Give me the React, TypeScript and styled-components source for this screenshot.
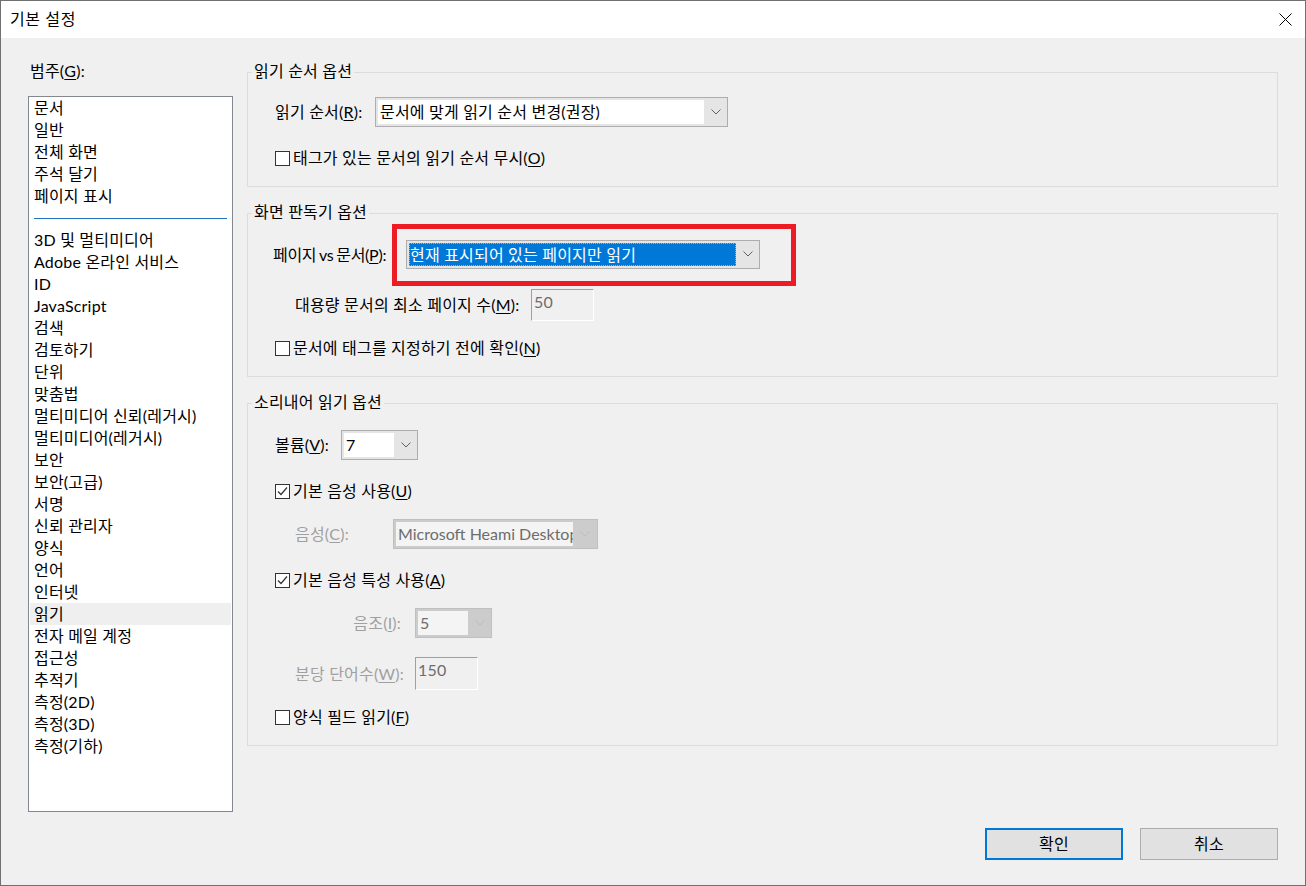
import React from 'react';
import styled, { createGlobalStyle } from 'styled-components';

const GlobalStyle = createGlobalStyle`
  html, body {
    margin: 0;
    padding: 0;
    background: #f0f0f0;
  }
  body {
    font-family: Lato, "Noto Sans CJK KR", sans-serif;
    font-size: 16px;
    letter-spacing: 0.2px;
    color: #000;
  }
  * {
    box-sizing: border-box;
  }
`;

const categories: (string | null)[] = [
    '문서',
    '일반',
    '전체 화면',
    '주석 달기',
    '페이지 표시',
    null,
    '3D 및 멀티미디어',
    'Adobe 온라인 서비스',
    'ID',
    'JavaScript',
    '검색',
    '검토하기',
    '단위',
    '맞춤법',
    '멀티미디어 신뢰(레거시)',
    '멀티미디어(레거시)',
    '보안',
    '보안(고급)',
    '서명',
    '신뢰 관리자',
    '양식',
    '언어',
    '인터넷',
    '읽기',
    '전자 메일 계정',
    '접근성',
    '추적기',
    '측정(2D)',
    '측정(3D)',
    '측정(기하)',
];

const Chevron = ({ color }: { color: string }) => (
    <svg width="10" height="6" viewBox="0 0 10 6">
        <polyline points="0.5,0.5 5,5 9.5,0.5" fill="none" stroke={color} strokeWidth="1" />
    </svg>
);

const CloseIcon = () => (
    <svg width="13" height="13" viewBox="0 0 13 13">
        <line x1="0.5" y1="0.5" x2="12.5" y2="12.5" stroke="#000" strokeWidth="1" />
        <line x1="12.5" y1="0.5" x2="0.5" y2="12.5" stroke="#000" strokeWidth="1" />
    </svg>
);

const CheckMark = () => (
    <svg width="13" height="13" viewBox="0 0 13 13">
        <polyline points="2,6.5 5,9.5 11,2.5" fill="none" stroke="#333" strokeWidth="1.2" />
    </svg>
);

type SelectVariant = 'normal' | 'focused' | 'disabled';

interface SelectProps {
    width: number;
    value: string;
    variant?: SelectVariant;
    arrowWidth?: number;
}

const Select = ({ width, value, variant = 'normal', arrowWidth = 23 }: SelectProps) => (
    <SelectBox $width={width} $variant={variant}>
        <SelectField $variant={variant}>
            <SelectText $variant={variant}>{value}</SelectText>
        </SelectField>
        <SelectArrow $width={arrowWidth}>
            <Chevron color={variant === 'disabled' ? '#bcbcbc' : '#606060'} />
        </SelectArrow>
    </SelectBox>
);

const Check = ({ checked, children }: { checked?: boolean; children: React.ReactNode }) => (
    <CheckRow>
        <CheckBox>{checked && <CheckMark />}</CheckBox>
        <CheckLabel>{children}</CheckLabel>
    </CheckRow>
);

const App = () => {
    return (
        <>
            <GlobalStyle />
            <Window>
                <TitleBar>
                    <Title>기본 설정</Title>
                    <CloseButton>
                        <CloseIcon />
                    </CloseButton>
                </TitleBar>
                <Body>
                    <Main>
                        <LeftColumn>
                            <CategoryLabel>
                                범주(<Key>G</Key>):
                            </CategoryLabel>
                            <ListBox>
                                {categories.map((c, i) =>
                                    c === null ? (
                                        <Separator key={i}>
                                            <SeparatorLine />
                                        </Separator>
                                    ) : (
                                        <ListItem key={i} $selected={c === '읽기'}>
                                            {c}
                                        </ListItem>
                                    )
                                )}
                            </ListBox>
                        </LeftColumn>

                        <RightColumn>
                            <Group $mt={11}>
                                <Legend>읽기 순서 옵션</Legend>
                                <Row $mt={16}>
                                    <Label $width={100}>
                                        읽기 순서(<Key>R</Key>):
                                    </Label>
                                    <Select width={353} value="문서에 맞게 읽기 순서 변경(권장)" />
                                </Row>
                                <Row $mt={20}>
                                    <Check>
                                        태그가 있는 문서의 읽기 순서 무시(<Key>O</Key>)
                                    </Check>
                                </Row>
                            </Group>

                            <Group $mt={26}>
                                <Legend>화면 판독기 옵션</Legend>
                                <Row $mt={2} $pl={-2}>
                                    <Label $width={119} $tight>
                                        페이지 vs 문서(<Key>P</Key>):
                                    </Label>
                                    <Highlight>
                                        <Select
                                            width={354}
                                            variant="focused"
                                            value="현재 표시되어 있는 페이지만 읽기"
                                        />
                                    </Highlight>
                                </Row>
                                <Row $mt={3} $pl={20}>
                                    <Label $width={236}>
                                        대용량 문서의 최소 페이지 수(<Key>M</Key>):
                                    </Label>
                                    <TextInput $width={63} $height={32}>
                                        50
                                    </TextInput>
                                </Row>
                                <Row $mt={16}>
                                    <Check>
                                        문서에 태그를 지정하기 전에 확인(<Key>N</Key>)
                                    </Check>
                                </Row>
                            </Group>

                            <Group $mt={26}>
                                <Legend>소리내어 읽기 옵션</Legend>
                                <Row $mt={18}>
                                    <Label $width={66}>
                                        볼륨(<Key>V</Key>):
                                    </Label>
                                    <Select width={77} value="7" />
                                </Row>
                                <Row $mt={20}>
                                    <Check checked>
                                        기본 음성 사용(<Key>U</Key>)
                                    </Check>
                                </Row>
                                <Row $mt={17} $pl={20}>
                                    <Label $width={98} $disabled>
                                        음성(<Key>C</Key>):
                                    </Label>
                                    <Select
                                        width={205}
                                        variant="disabled"
                                        arrowWidth={24}
                                        value="Microsoft Heami Desktop - Korean"
                                    />
                                </Row>
                                <Row $mt={20}>
                                    <Check checked>
                                        기본 음성 특성 사용(<Key>A</Key>)
                                    </Check>
                                </Row>
                                <Row $mt={17} $pl={20}>
                                    <Label $width={120} $disabled $right>
                                        음조(<Key>I</Key>):
                                    </Label>
                                    <Select width={77} variant="disabled" value="5" />
                                </Row>
                                <Row $mt={19} $pl={20}>
                                    <Label $width={120} $disabled>
                                        분당 단어수(<Key>W</Key>):
                                    </Label>
                                    <TextInput $width={63} $height={33}>
                                        150
                                    </TextInput>
                                </Row>
                                <Row $mt={16}>
                                    <Check>
                                        양식 필드 읽기(<Key>F</Key>)
                                    </Check>
                                </Row>
                            </Group>
                        </RightColumn>
                    </Main>

                    <Footer>
                        <Button $primary>확인</Button>
                        <Button>취소</Button>
                    </Footer>
                </Body>
            </Window>
        </>
    );
};

const Window = styled.div`
    width: 1306px;
    height: 886px;
    border: 1px solid #707070;
    display: flex;
    flex-direction: column;
    background: #f0f0f0;
`;

const TitleBar = styled.div`
    height: 37px;
    flex: none;
    background: #fff;
    display: flex;
    align-items: center;
    justify-content: space-between;
    padding-left: 9px;
    padding-bottom: 1px;
`;

const Title = styled.div`
    font-size: 16px;
    letter-spacing: 0.6px;
    line-height: 20px;
`;

const CloseButton = styled.div`
    width: 40px;
    height: 36px;
    display: flex;
    align-items: center;
    justify-content: center;
`;

const Body = styled.div`
    flex: 1;
    display: flex;
    flex-direction: column;
    padding: 23px 27px 25px 27px;
`;

const Main = styled.div`
    display: flex;
    gap: 14px;
    align-items: flex-start;
`;

const LeftColumn = styled.div`
    width: 205px;
    flex: none;
    display: flex;
    flex-direction: column;
`;

const CategoryLabel = styled.div`
    height: 20px;
    line-height: 20px;
    padding-left: 2px;
    margin-bottom: 15px;
`;

const Key = styled.span`
    text-decoration: underline;
    text-underline-offset: 2px;
    text-decoration-thickness: 1px;
`;

const ListBox = styled.div`
    height: 716px;
    border: 1px solid #828790;
    background: #fff;
    padding: 0 1px;
    overflow: hidden;
`;

const ListItem = styled.div<{ $selected?: boolean }>`
    height: 22px;
    line-height: 22px;
    padding-left: 4px;
    white-space: nowrap;
    background: ${(p) => (p.$selected ? '#efefef' : 'transparent')};
`;

const Separator = styled.div`
    height: 22px;
    display: flex;
    align-items: center;
    padding: 0 4px;
`;

const SeparatorLine = styled.div`
    flex: 1;
    height: 1px;
    background: #1f72c4;
`;

const RightColumn = styled.div`
    flex: 1;
    display: flex;
    flex-direction: column;
`;

const Group = styled.div<{ $mt: number }>`
    margin-top: ${(p) => p.$mt}px;
    border: 1px solid #dcdcdc;
    display: flex;
    flex-direction: column;
    padding: 0 0 17px 27px;
`;

const Legend = styled.div`
    align-self: flex-start;
    height: 20px;
    line-height: 20px;
    margin-top: -12px;
    margin-left: -23px;
    padding: 0 2px;
    background: #f0f0f0;
`;

const Row = styled.div<{ $mt: number; $pl?: number }>`
    display: flex;
    align-items: center;
    margin-top: ${(p) => p.$mt}px;
    margin-left: ${(p) => p.$pl ?? 0}px;
`;

const Label = styled.div<{ $width: number; $disabled?: boolean; $right?: boolean; $tight?: boolean }>`
    width: ${(p) => p.$width}px;
    flex: none;
    line-height: 22px;
    white-space: nowrap;
    color: ${(p) => (p.$disabled ? '#a0a0a0' : '#000')};
    text-align: ${(p) => (p.$right ? 'right' : 'left')};
    padding-right: ${(p) => (p.$right ? 14 : 0)}px;
    letter-spacing: ${(p) => (p.$tight ? '-0.3px' : '0.2px')};
    word-spacing: ${(p) => (p.$tight ? '-1px' : '0')};
`;

const SelectBox = styled.div<{ $width: number; $variant: SelectVariant }>`
    width: ${(p) => p.$width}px;
    height: ${(p) => (p.$variant === 'focused' ? 29 : 30)}px;
    flex: none;
    display: flex;
    padding: 2px 0 2px 2px;
    border: 1px solid ${(p) => (p.$variant === 'disabled' ? '#bfbfbf' : '#adadad')};
    background: ${(p) => (p.$variant === 'disabled' ? '#cccccc' : '#e5e5e5')};
`;

const SelectField = styled.div<{ $variant: SelectVariant }>`
    flex: 1;
    min-width: 0;
    overflow: hidden;
    display: flex;
    align-items: center;
    padding-left: ${(p) => (p.$variant === 'focused' ? 1 : 2)}px;
    background: ${(p) =>
        p.$variant === 'focused' ? '#0078d7' : p.$variant === 'disabled' ? '#f4f4f4' : '#fff'};
    outline: ${(p) => (p.$variant === 'focused' ? '1px dotted #f7a24a' : 'none')};
    outline-offset: -1px;
`;

const SelectText = styled.span<{ $variant: SelectVariant }>`
    white-space: nowrap;
    line-height: 22px;
    letter-spacing: ${(p) => (p.$variant === 'disabled' ? '0' : '0.2px')};
    color: ${(p) =>
        p.$variant === 'focused' ? '#fff' : p.$variant === 'disabled' ? '#6d6d6d' : '#000'};
`;

const SelectArrow = styled.div<{ $width: number }>`
    width: ${(p) => p.$width}px;
    flex: none;
    display: flex;
    align-items: center;
    justify-content: center;
    padding-bottom: 1px;
`;

const Highlight = styled.div`
    border: 5px solid #ed1c24;
    padding: 11px 31px 12px 9px;
`;

const TextInput = styled.div<{ $width: number; $height: number }>`
    width: ${(p) => p.$width}px;
    height: ${(p) => p.$height}px;
    flex: none;
    border: 1px solid;
    border-color: #a0a0a0 #ffffff #ffffff #a0a0a0;
    background: #f0f0f0;
    color: #6d6d6d;
    line-height: 22px;
    padding: 1px 0 0 2px;
`;

const CheckRow = styled.div`
    display: flex;
    align-items: center;
    height: 22px;
    gap: 3px;
`;

const CheckBox = styled.div`
    width: 15px;
    height: 15px;
    flex: none;
    border: 1px solid #333;
    background: #fff;
    display: flex;
    align-items: center;
    justify-content: center;
`;

const CheckLabel = styled.div`
    line-height: 22px;
    white-space: nowrap;
`;

const Footer = styled.div`
    margin-top: auto;
    display: flex;
    justify-content: flex-end;
    gap: 17px;
`;

const Button = styled.div<{ $primary?: boolean }>`
    width: 138px;
    height: 32px;
    display: flex;
    align-items: center;
    justify-content: center;
    background: #e1e1e1;
    border: ${(p) => (p.$primary ? '2px solid #0078d7' : '1px solid #adadad')};
    line-height: 20px;
`;

export default App;
